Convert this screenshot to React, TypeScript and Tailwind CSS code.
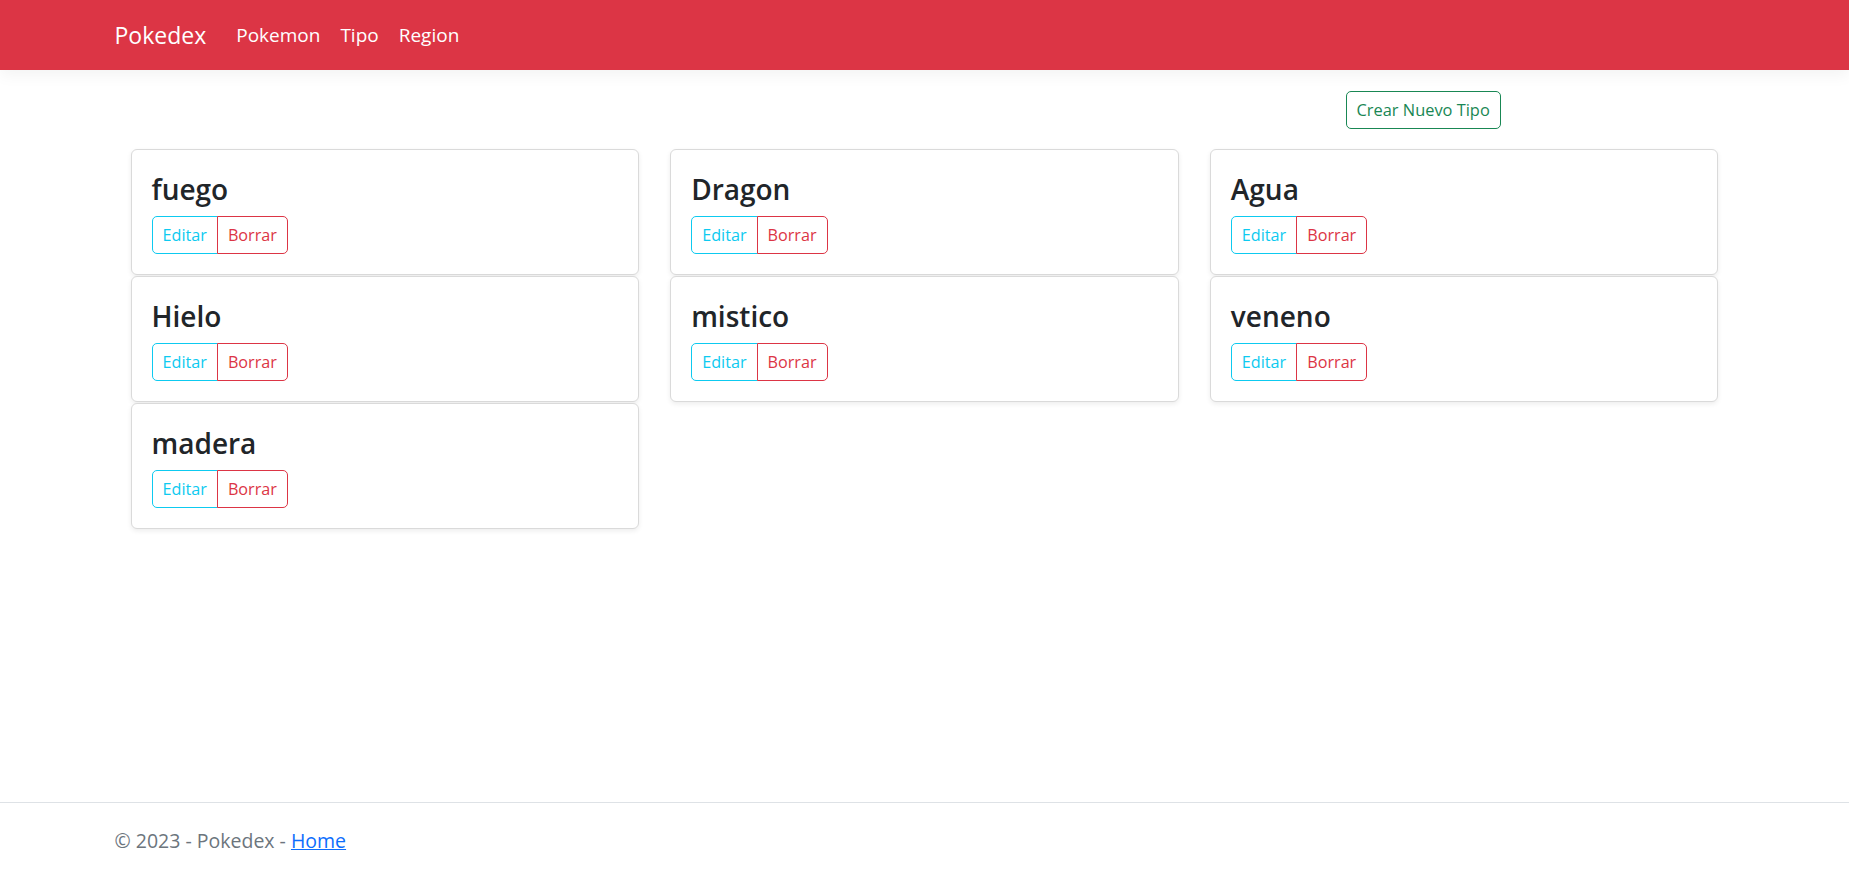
import React from 'react';

const columns: string[][] = [
  ['fuego', 'Hielo', 'madera'],
  ['Dragon', 'mistico'],
  ['Agua', 'veneno'],
];

const TipoCard: React.FC<{ nombre: string }> = ({ nombre }) => (
  <div className="rounded-[6px] border border-[#dadada] bg-white shadow-[0_2px_5px_rgba(0,0,0,0.075)]">
    <div className="p-[20px]">
      <h4 className="mb-[9px] pt-[2px] text-[28px] font-semibold leading-[35px] text-[#212529]">{nombre}</h4>
      <div className="inline-flex">
        <button className="rounded-l-[5px] border border-[#0dcaf0] px-[10px] py-[5px] text-[16.2px] leading-[26px] text-[#0dcaf0]">
          Editar
        </button>
        <button className="-ml-px rounded-r-[5px] border border-[#dc3545] px-[10px] py-[5px] text-[16.2px] leading-[26px] text-[#dc3545]">
          Borrar
        </button>
      </div>
    </div>
  </div>
);

export default function App() {
  return (
    <div className="flex min-h-[878px] flex-col bg-white font-['Open_Sans','Noto_Sans',sans-serif]">
      <nav className="h-[70px] bg-[#dc3545] shadow-[0_5px_15px_rgba(0,0,0,0.05)]">
        <div className="mx-auto flex h-full max-w-[1650px] items-center px-[15px]">
          <span className="mr-[20px] text-[23px] leading-[37px] text-white">Pokedex</span>
          <ul className="flex">
            <li className="px-[10px] text-[19px] leading-[30px] text-white">Pokemon</li>
            <li className="px-[10px] text-[19px] leading-[30px] text-white">Tipo</li>
            <li className="px-[10px] text-[19px] leading-[30px] text-white">Region</li>
          </ul>
        </div>
      </nav>

      <main className="mx-auto w-full max-w-[1650px] px-[15px] pt-[21px]">
        <div className="flex">
          <button className="ml-[1231px] rounded-[5px] border border-[#198754] px-[10px] py-[5px] text-[16.4px] leading-[26px] text-[#198754]">
            Crear Nuevo Tipo
          </button>
        </div>
        <div className="mt-[20px] grid grid-cols-3 items-start gap-x-[31px] px-[16px]">
          {columns.map((col, i) => (
            <div key={i} className="flex flex-col gap-[1px]">
              {col.map((nombre) => (
                <TipoCard key={nombre} nombre={nombre} />
              ))}
            </div>
          ))}
        </div>
      </main>

      <footer className="mt-auto border-t border-[#dee2e6] text-[19.5px] leading-[75px] text-[#6c757d]">
        <div className="mx-auto max-w-[1650px] px-[15px]">
          © 2023 - Pokedex - <a href="#" className="text-[#0d6efd] underline">Home</a>
        </div>
      </footer>
    </div>
  );
}
